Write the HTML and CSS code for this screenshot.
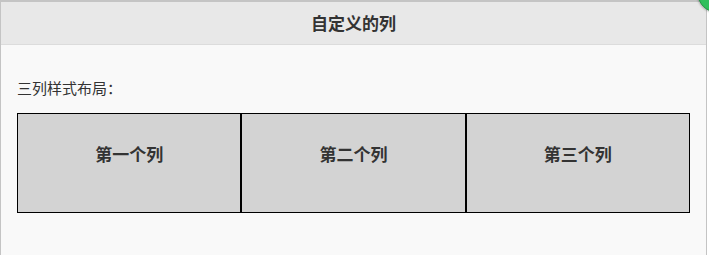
FILE: index.html
```html
<!DOCTYPE html>
<html lang="zh">
<head>
<meta charset="utf-8">
<title>自定义的列</title>
<link rel="stylesheet" href="styles.css">
</head>
<body>
<div class="dialog">
  <div class="header">自定义的列</div>
  <div class="content">
    <p class="intro">三列样式布局：</p>
    <table class="cols">
      <tr>
        <td>第一个列</td>
        <td>第二个列</td>
        <td>第三个列</td>
      </tr>
    </table>
  </div>
  <span class="close"></span>
</div>
</body>
</html>
```
FILE: styles.css
```css
html, body {
  margin: 0;
  padding: 0;
  background: #ffffff;
}
body {
  font-family: "Noto Sans CJK SC", "Noto Sans", sans-serif;
  color: #333;
}
.dialog {
  position: relative;
  width: 705px;
  height: 253px;
  border-top: 2px solid #c4c4c4;
  border-left: 1px solid #c4c4c4;
  border-right: 1px solid #c4c4c4;
  background: #f9f9f9;
  overflow: visible;
}
.header {
  height: 42px;
  line-height: 42px;
  background: #e8e8e8;
  border-bottom: 1px solid #dcdcdc;
  text-align: center;
  font-size: 17px;
  font-weight: bold;
  color: #333;
}
.content {
  padding: 0 16px;
}
.intro {
  margin: 0;
  padding-top: 32px;
  height: 22px;
  line-height: 22px;
  font-size: 15px;
  color: #333;
}
.cols {
  margin-top: 14px;
  width: 673px;
  border-collapse: separate;
  border-spacing: 0;
  table-layout: fixed;
}
.cols td {
  padding: 29px 0 0;
  box-sizing: border-box;
  height: 100px;
  vertical-align: top;
  border: 1px solid #000;
  background: #d3d3d3;
  text-align: center;
  font-size: 17px;
  line-height: 22px;
  font-weight: bold;
  color: #333;
}
.close {
  position: absolute;
  top: -25px;
  right: -27px;
  width: 33px;
  height: 33px;
  border-radius: 50%;
  background: #2fbf5c;
  border: 1px solid #1f9a45;
  box-shadow: 0 0 2px 1px rgba(0,0,0,0.25);
}
```
